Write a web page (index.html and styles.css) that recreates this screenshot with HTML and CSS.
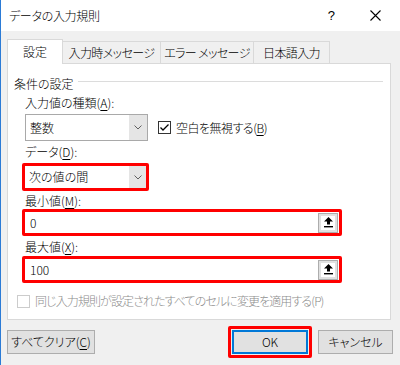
FILE: index.html
```html
<!DOCTYPE html>
<html lang="ja">
<head>
<meta charset="utf-8">
<title>データの入力規則</title>
<link rel="stylesheet" href="styles.css">
</head>
<body>
<div class="window">
  <div class="titlebar">
    <span class="title">データの入力規則</span>
    <span class="help">?</span>
    <svg class="close" width="11" height="11" viewBox="0 0 11 11"><path d="M0.5 0.5L10.5 10.5M10.5 0.5L0.5 10.5" stroke="#000" stroke-width="1.1" fill="none"/></svg>
  </div>
  <div class="client">
    <div class="tabs">
      <div class="tab active t1">設定</div>
      <div class="tab t2">入力時メッセージ</div>
      <div class="tab t3">エラー メッセージ</div>
      <div class="tab t4">日本語入力</div>
    </div>
    <div class="panel">
      <div class="group-head"><span class="group-title">条件の設定</span><span class="group-line"></span></div>
      <div class="label l-type">入力値の種類(<u>A</u>):</div>
      <div class="row-type">
        <div class="combo">
          <span class="combo-text">整数</span>
          <span class="combo-btn"><svg width="8" height="5" viewBox="0 0 8 5"><path d="M0.5 0.5L4 4L7.5 0.5" stroke="#606060" stroke-width="1" fill="none"/></svg></span>
        </div>
        <div class="check">
          <svg class="box" width="13" height="13" viewBox="0 0 13 13"><rect x="0.5" y="0.5" width="12" height="12" fill="#fff" stroke="#333"/><path d="M2.5 6.5L5 9L10.5 3.5" stroke="#000" stroke-width="1.3" fill="none"/></svg>
          <span class="tight">空白を無視する(<u>B</u>)</span>
        </div>
      </div>
      <div class="label l-data">データ(<u>D</u>):</div>
      <div class="redbox red-combo">
        <span class="combo-text">次の値の間</span>
        <span class="combo-btn"><svg width="8" height="5" viewBox="0 0 8 5"><path d="M0.5 0.5L4 4L7.5 0.5" stroke="#606060" stroke-width="1" fill="none"/></svg></span>
      </div>
      <div class="label l-min">最小値(<u>M</u>):</div>
      <div class="redbox red-input">
        <span class="input-text">0</span>
        <span class="ref-btn"><svg width="9" height="11" viewBox="0 0 9 11"><path d="M4.5 0L9 4.5H6V7.5H3V4.5H0Z" fill="#000"/><rect x="0" y="9" width="9" height="1.4" fill="#000"/></svg></span>
      </div>
      <div class="label l-max">最大値(<u>X</u>):</div>
      <div class="redbox red-input">
        <span class="input-text">100</span>
        <span class="ref-btn"><svg width="9" height="11" viewBox="0 0 9 11"><path d="M4.5 0L9 4.5H6V7.5H3V4.5H0Z" fill="#000"/><rect x="0" y="9" width="9" height="1.4" fill="#000"/></svg></span>
      </div>
      <div class="check disabled">
        <svg class="box" width="13" height="13" viewBox="0 0 13 13"><rect x="0.5" y="0.5" width="12" height="12" fill="#fff" stroke="#cccccc"/></svg>
        <span class="tighter">同じ入力規則が設定されたすべてのセルに変更を適用する(P)</span>
      </div>
    </div>
    <div class="buttons">
      <div class="btn btn-clear">すべてクリア(<u>C</u>)</div>
      <div class="right-buttons">
        <div class="ok-red"><div class="btn btn-ok">OK</div></div>
        <div class="btn btn-cancel">キャンセル</div>
      </div>
    </div>
  </div>
</div>
</body>
</html>
```

FILE: styles.css
```css
* {
  box-sizing: border-box;
  margin: 0;
  padding: 0;
}

html, body {
  width: 400px;
  height: 365px;
  overflow: hidden;
}

body {
  font-family: "Noto Sans CJK JP", "Noto Sans", sans-serif;
  font-size: 12px;
  font-weight: 300;
  line-height: 16px;
  color: #000;
  font-feature-settings: "palt";
  background: #f0f0f0;
}

u {
  text-decoration: underline;
  text-underline-offset: 2px;
  text-decoration-thickness: 1px;
}

.tight {
  letter-spacing: -0.5px;
}

.tighter {
  letter-spacing: -0.9px;
}

.window {
  width: 400px;
  height: 365px;
  border-left: 1px solid #2b7bd6;
  background: #f0f0f0;
}

.titlebar {
  height: 31px;
  background: #fff;
  display: flex;
  align-items: center;
  padding-left: 8px;
}

.title {
  flex: 1;
  letter-spacing: -0.3px;
}

.help {
  font-family: "Liberation Sans", sans-serif;
  font-size: 13px;
  margin-right: 35px;
}

.close {
  margin-right: 19px;
}

.client {
  padding: 8px 7px 0 6px;
}

.tabs {
  display: flex;
  align-items: flex-end;
  height: 24px;
  position: relative;
  z-index: 1;
}

.tab {
  height: 22px;
  border: 1px solid #d9d9d9;
  border-bottom: none;
  background: #f0f0f0;
  display: flex;
  align-items: center;
  justify-content: center;
  margin-left: -1px;
  letter-spacing: -0.6px;
}

.tab.active {
  height: 25px;
  margin-bottom: -1px;
  margin-left: 0;
  background: #fff;
  padding-bottom: 1px;
  letter-spacing: 0;
}

.t1 { width: 56px; }
.t2 { width: 99px; }
.t3 { width: 94px; }
.t4 { width: 77px; }

.panel {
  width: 384px;
  height: 257px;
  background: #fff;
  border: 1px solid #d9d9d9;
  padding-left: 17px;
}

.group-head {
  display: flex;
  align-items: flex-start;
  margin-top: 12px;
  margin-left: -11px;
  height: 16px;
}

.group-line {
  flex: 1;
  height: 1px;
  background: #dcdcdc;
  margin: 5px 7px 0 4px;
}

.label {
  height: 16px;
}

.l-type { margin-top: 3px; }
.l-data { margin-top: 3px; }
.l-min { margin-top: 2px; }
.l-max { margin-top: 3px; }

.row-type {
  display: flex;
  align-items: center;
  margin-top: 3px;
}

.combo {
  width: 123px;
  height: 27px;
  border: 1px solid #a9a9a9;
  display: flex;
  background: #fff;
}

.combo-text {
  flex: 1;
  display: flex;
  align-items: center;
  padding-left: 4px;
}

.combo-btn {
  width: 18px;
  background: #e5e5e5;
  display: flex;
  align-items: center;
  justify-content: center;
}

.check {
  display: flex;
  align-items: center;
}

.row-type .check {
  margin-left: 10px;
}

.check .box {
  margin-right: 5px;
  flex: none;
}

.redbox {
  border: 3px solid #f00;
  border-radius: 2px;
  display: flex;
  margin-left: -3px;
  background: #fff;
}

.red-combo {
  width: 127px;
  height: 28px;
  margin-top: 3px;
}

.red-combo .combo-text {
  padding-left: 4px;
}

.red-combo .combo-btn {
  width: 17px;
}

.red-input {
  width: 320px;
  height: 27px;
  align-items: center;
}

.l-max + .red-input {
  margin-top: 1px;
}

.input-text {
  flex: 1;
  padding-left: 5px;
}

.ref-btn {
  width: 20px;
  height: 20px;
  border: 1px solid #adadad;
  background: #fff;
  box-shadow: inset 0 0 0 2px #e1e1e1;
  display: flex;
  align-items: center;
  justify-content: center;
  margin-right: 1px;
}

.check.disabled {
  margin-top: 10px;
  margin-left: -8px;
  color: #8c8c8c;
}

.buttons {
  display: flex;
  justify-content: space-between;
  align-items: flex-start;
  margin-top: 6px;
}

.btn {
  height: 24px;
  background: #e1e1e1;
  border: 1px solid #adadad;
  display: flex;
  align-items: center;
  justify-content: center;
}

.btn-clear {
  width: 88px;
  margin-top: 4px;
}

.right-buttons {
  display: flex;
  align-items: flex-start;
}

.ok-red {
  border: 3px solid #f00;
  border-radius: 2px;
  padding: 1px;
}

.btn-ok {
  width: 76px;
  border: 2px solid #0078d7;
}

.btn-cancel {
  width: 75px;
  margin-left: 6px;
  margin-top: 4px;
}
```
